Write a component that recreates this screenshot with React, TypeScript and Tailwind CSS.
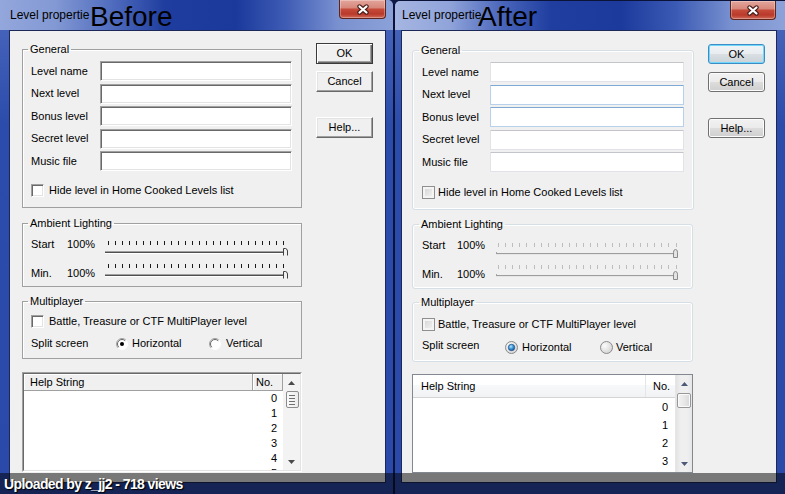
import React from "react"

const LABELS = ["Level name", "Next level", "Bonus level", "Secret level", "Music file"]
const ROWS_CLASSIC = ["0", "1", "2", "3", "4", "5"]
const ROWS_AERO = ["0", "1", "2", "3"]

function CloseButton({ aero }: { aero?: boolean }) {
  return (
    <div
      className={
        aero
          ? "mr-[9px] flex h-[19px] w-[46px] items-center justify-center rounded-b-[4px] border border-t-0 border-[#5e241e] bg-[linear-gradient(180deg,#e3a59c_0%,#d7897c_42%,#c54a3a_52%,#b9392a_78%,#d06a58_100%)] shadow-[inset_0_0_0_1px_rgba(255,255,255,0.3)]"
          : "mr-[7px] flex h-[19px] w-[47px] items-center justify-center rounded-b-[4px] border border-t-0 border-[#5e241e] bg-[linear-gradient(180deg,#e3a59c_0%,#d7897c_42%,#c54a3a_52%,#b9392a_78%,#d06a58_100%)] shadow-[inset_0_0_0_1px_rgba(255,255,255,0.3)]"
      }
    >
      <svg width="14" height="11" viewBox="0 0 14 11">
        <path d="M3.5 2.5L10.5 8.5M10.5 2.5L3.5 8.5" stroke="#4a1f1a" strokeWidth="4.4" strokeLinecap="round" />
        <path d="M3.5 2.5L10.5 8.5M10.5 2.5L3.5 8.5" stroke="#ffffff" strokeWidth="2.2" strokeLinecap="round" />
      </svg>
    </div>
  )
}

function Group({ title, aero, className, children }: { title: string; aero?: boolean; className: string; children: React.ReactNode }) {
  return (
    <fieldset
      className={
        aero
          ? `rounded-[3px] border border-[#d5dfe5] px-[9px] shadow-[inset_0_0_0_1px_#ffffff] ${className}`
          : `border border-[#a0a0a0] px-[8px] shadow-[inset_1px_1px_0_#ffffff] ${className}`
      }
    >
      <legend className="ml-[-3px] px-[2px] text-[11px] leading-[13px]">{title}</legend>
      {children}
    </fieldset>
  )
}

function Input({ aero, hover }: { aero?: boolean; hover?: boolean }) {
  if (!aero)
    return (
      <div className="h-[20px] w-[192px] border border-b-white border-l-[#a0a0a0] border-r-white border-t-[#a0a0a0] bg-white shadow-[inset_1px_1px_0_#696969,inset_-1px_-1px_0_#e3e3e3]" />
    )
  return hover ? (
    <div className="h-[20px] w-[194px] rounded-[1px] border border-[#b7d1ea] border-t-[#7fa9d4] bg-white" />
  ) : (
    <div className="h-[20px] w-[194px] rounded-[1px] border border-[#e2e3ea] border-t-[#c3c5cb] bg-white" />
  )
}

function Check({ aero }: { aero?: boolean }) {
  return aero ? (
    <div className="h-[13px] w-[13px] border border-[#8e8f8f] bg-[linear-gradient(135deg,#d2d2d2_0%,#f6f6f6_100%)] shadow-[inset_0_0_0_2px_#f4f4f4]" />
  ) : (
    <div className="h-[13px] w-[13px] border border-b-white border-l-[#a0a0a0] border-r-white border-t-[#a0a0a0] bg-white shadow-[inset_1px_1px_0_#696969,inset_-1px_-1px_0_#e3e3e3]" />
  )
}

function Radio({ aero, on }: { aero?: boolean; on?: boolean }) {
  if (aero)
    return (
      <svg width="13" height="13" viewBox="0 0 13 13" className="block">
        <defs>
          <radialGradient id="rbg" cx="35%" cy="35%" r="70%">
            <stop offset="0%" stopColor="#fbfbfb" />
            <stop offset="100%" stopColor="#d4d4d4" />
          </radialGradient>
          <radialGradient id="rdot" cx="40%" cy="35%" r="70%">
            <stop offset="0%" stopColor="#aee8ff" />
            <stop offset="55%" stopColor="#3a8fd2" />
            <stop offset="100%" stopColor="#1c4f8c" />
          </radialGradient>
        </defs>
        <circle cx="6.5" cy="6.5" r="6" fill="url(#rbg)" stroke="#8a8a8a" />
        {on && <circle cx="6.5" cy="6.5" r="3.2" fill="url(#rdot)" stroke="#24578f" strokeWidth="0.8" />}
      </svg>
    )
  return (
    <svg width="12" height="12" viewBox="0 0 12 12" className="block">
      <circle cx="6" cy="6" r="5.5" fill="#ffffff" />
      <path d="M2.1 9.9A5.5 5.5 0 0 1 9.9 2.1" stroke="#a0a0a0" fill="none" />
      <path d="M2.8 9.2A4.5 4.5 0 0 1 9.2 2.8" stroke="#696969" fill="none" />
      <path d="M9.9 2.1A5.5 5.5 0 0 1 2.1 9.9" stroke="#ffffff" fill="none" />
      {on && <circle cx="6" cy="6" r="2" fill="#000000" />}
    </svg>
  )
}

function Slider({ aero }: { aero?: boolean }) {
  const ticks = Array.from({ length: 26 }, (_, i) => i)
  if (aero)
    return (
      <svg width="184" height="16" viewBox="0 0 184 16" className="block">
        {ticks.map((i) => {
          const x = Math.round(2 + i * 7.1) + 0.5
          return <line key={i} x1={x} x2={x} y1={0} y2={4} stroke="#bdbdbd" />
        })}
        <line x1="0.5" x2="0.5" y1="9" y2="12" stroke="#a8a8a8" />
        <rect x="0" y="10" width="182" height="1" fill="#9d9d9d" />
        <rect x="0" y="11" width="182" height="1" fill="#e6e6e6" />
        <path d="M177.5 14.5V9.2Q177.5 6.5 179.5 6.5Q181.5 6.5 181.5 9.2V14.5Z" fill="#e4e4e4" stroke="#8a8a8a" />
      </svg>
    )
  return (
    <svg width="184" height="16" viewBox="0 0 184 16" className="block">
      {ticks.map((i) => {
        const x = 3 + i * 7 + 0.5
        return <line key={i} x1={x} x2={x} y1={0} y2={4} stroke="#1a1a1a" />
      })}
      <rect x="0" y="10" width="179" height="1" fill="#a0a0a0" />
      <rect x="0" y="11" width="179" height="1" fill="#505050" />
      <rect x="0" y="12" width="179" height="1" fill="#ffffff" />
      <path d="M178.5 14.5V7.5M178.5 7.5H180.5Q182.5 8 182.5 10V14.5" fill="#f0f0f0" stroke="#404040" />
    </svg>
  )
}

function Arrow({ up, aero }: { up?: boolean; aero?: boolean }) {
  return (
    <svg width="7" height="4" viewBox="0 0 7 4" className="block">
      <path d={up ? "M0 4L3.5 0L7 4Z" : "M0 0L3.5 4L7 0Z"} fill={aero ? "#4b5a78" : "#4a4a4a"} />
    </svg>
  )
}

function ListView({ aero }: { aero?: boolean }) {
  if (aero)
    return (
      <div className="mt-[12px] flex h-[99px] w-[281px] border border-[#828790] bg-white">
        <div className="flex w-[262px] flex-col overflow-hidden">
          <div className="flex h-[23px] shrink-0 border-b border-[#d5d5d5] bg-[linear-gradient(180deg,#ffffff_0%,#ffffff_45%,#f7f8fa_46%,#f1f2f4_100%)]">
            <div className="flex w-[233px] items-center border-r border-[#e3e5e7] pl-[8px]">Help String</div>
            <div className="flex flex-1 items-center pl-[7px]">No.</div>
          </div>
          {ROWS_AERO.map((n) => (
            <div key={n} className="flex h-[18px] shrink-0 items-center justify-end pr-[7px]">
              {n}
            </div>
          ))}
        </div>
        <div className="flex w-[17px] flex-col items-center border-l border-[#e6e6e6] bg-[linear-gradient(90deg,#e3e3e3_0%,#efefef_30%,#efefef_70%,#e6e6e6_100%)]">
          <div className="flex h-[17px] items-center">
            <Arrow up aero />
          </div>
          <div className="mt-[1px] h-[15px] w-[14px] rounded-[2px] border border-[#979797] bg-[linear-gradient(90deg,#f3f3f3_0%,#e8e8e8_50%,#d8d8d8_100%)] shadow-[inset_0_0_0_1px_#fafafa]" />
          <div className="flex-1" />
          <div className="flex h-[17px] items-center">
            <Arrow aero />
          </div>
        </div>
      </div>
    )
  return (
    <div className="mt-[13px] flex h-[100px] w-[280px] border border-b-white border-l-[#a0a0a0] border-r-white border-t-[#a0a0a0]">
      <div className="flex flex-1 border border-b-[#e3e3e3] border-l-[#696969] border-r-[#e3e3e3] border-t-[#696969] bg-white">
        <div className="flex w-[259px] flex-col overflow-hidden">
          <div className="flex h-[17px] shrink-0">
            <div className="flex w-[229px] items-center border-b border-r border-[#a0a0a0] bg-[#f0f0f0] pl-[6px] shadow-[inset_1px_1px_0_#ffffff]">Help String</div>
            <div className="flex flex-1 items-center border-b border-r border-[#a0a0a0] bg-[#f0f0f0] pl-[3px] shadow-[inset_1px_1px_0_#ffffff]">No.</div>
          </div>
          {ROWS_CLASSIC.map((n) => (
            <div key={n} className="flex h-[15px] shrink-0 items-center justify-end pr-[6px]">
              {n}
            </div>
          ))}
        </div>
        <div className="flex w-[17px] flex-col items-center bg-[#f3f3f3]">
          <div className="flex h-[17px] items-center">
            <Arrow up />
          </div>
          <div className="ml-[1px] flex h-[17px] w-[13px] flex-col items-center justify-center gap-[2px] rounded-[2px] border border-[#8c8c8c] bg-[linear-gradient(90deg,#fafafa_0%,#ececec_100%)]">
            <div className="h-px w-[6px] bg-[#6f6f6f]" />
            <div className="h-px w-[6px] bg-[#6f6f6f]" />
            <div className="h-px w-[6px] bg-[#6f6f6f]" />
            <div className="h-px w-[6px] bg-[#6f6f6f]" />
          </div>
          <div className="flex-1" />
          <div className="flex h-[17px] items-center">
            <Arrow />
          </div>
        </div>
      </div>
    </div>
  )
}

function Button({ aero, label, main, className }: { aero?: boolean; label: string; main?: boolean; className: string }) {
  if (aero)
    return (
      <div
        className={
          main
            ? `flex h-[20px] w-[57px] items-center justify-center rounded-[3px] border border-[#3c8cc6] bg-[linear-gradient(180deg,#f1f4f6_0%,#e9edf0_48%,#d9dfe3_50%,#cbd3d8_100%)] shadow-[inset_0_0_0_1px_#6fd8fb] ${className}`
            : `flex h-[20px] w-[57px] items-center justify-center rounded-[3px] border border-[#707070] bg-[linear-gradient(180deg,#f2f2f2_0%,#ebebeb_48%,#dddddd_50%,#cfcfcf_100%)] shadow-[inset_0_0_0_1px_#fcfcfc] ${className}`
        }
      >
        {label}
      </div>
    )
  return (
    <div
      className={
        main
          ? `flex h-[21px] w-[57px] items-center justify-center border border-[#3a3a3a] bg-[#f0f0f0] shadow-[inset_1px_1px_0_#ffffff,inset_-1px_-1px_0_#696969,inset_-2px_-2px_0_#a0a0a0] ${className}`
          : `flex h-[21px] w-[57px] items-center justify-center border border-b-[#696969] border-l-white border-r-[#696969] border-t-white bg-[#f0f0f0] shadow-[inset_-1px_-1px_0_#a0a0a0,inset_1px_1px_0_#e3e3e3] ${className}`
      }
    >
      {label}
    </div>
  )
}

function Body({ aero }: { aero?: boolean }) {
  return (
    <div
      className={
        aero
          ? "flex h-[453px] w-[376px] border border-[#1c2858] bg-[#f0f0f0] pl-[10px] pt-[13px]"
          : "flex h-[453px] w-[377px] border border-[#1c2858] bg-[#f0f0f0] pl-[12px] pt-[12px]"
      }
    >
      <div className="flex flex-col">
        <Group title="General" aero={aero} className={aero ? "w-[281px] pb-[10px] pt-[5px]" : "w-[280px] pb-[10px] pt-[5px]"}>
          <div className={aero ? "flex flex-col gap-[2.5px]" : "flex flex-col gap-[2.6px]"}>
            {LABELS.map((l, i) => (
              <div key={l} className="flex h-[20px] items-center">
                <span className={aero ? "w-[68px]" : "w-[69px]"}>{l}</span>
                <Input aero={aero} hover={i === 1 || i === 2} />
              </div>
            ))}
          </div>
          <div className={aero ? "mt-[14px] flex h-[13px] items-center gap-[3px]" : "mt-[13px] flex h-[13px] items-center gap-[5px]"}>
            <Check aero={aero} />
            <span>Hide level in Home Cooked Levels list</span>
          </div>
        </Group>

        <Group title="Ambient Lighting" aero={aero} className={aero ? "mt-[8px] w-[281px] pb-[3px] pt-[8px]" : "mt-[9px] w-[280px] pb-[2px] pt-[8px]"}>
          <div className="flex h-[20px] items-start">
            <span className={aero ? "w-[35px]" : "w-[36px]"}>Start</span>
            <span className={aero ? "w-[39px]" : "w-[38px]"}>100%</span>
            <div className={aero ? "mt-[4px]" : "mt-[3px]"}>
              <Slider aero={aero} />
            </div>
          </div>
          <div className="mt-[6px] flex h-[20px] items-start">
            <span className={aero ? "mt-[3px] w-[35px]" : "mt-[3px] w-[36px]"}>Min.</span>
            <span className={aero ? "mt-[3px] w-[39px]" : "mt-[3px] w-[38px]"}>100%</span>
            <Slider aero={aero} />
          </div>
        </Group>

        <Group title="Multiplayer" aero={aero} className={aero ? "mt-[7px] w-[281px] pb-[9px] pt-[9px]" : "mt-[8px] w-[280px] pb-[8px] pt-[7px]"}>
          <div className={aero ? "flex h-[13px] items-center gap-[3px]" : "flex h-[13px] items-center gap-[5px]"}>
            <Check aero={aero} />
            <span>Battle, Treasure or CTF MultiPlayer level</span>
          </div>
          <div className={aero ? "mt-[8px] flex h-[13px] items-center" : "mt-[9px] flex h-[13px] items-center"}>
            <span className={aero ? "w-[83px]" : "w-[85px]"}>Split screen</span>
            <div className={aero ? "mt-[3px]" : ""}>
              <Radio aero={aero} on />
            </div>
            <span className={aero ? "ml-[4px] mt-[3px] w-[78px]" : "ml-[4px] w-[77px]"}>Horizontal</span>
            <div className={aero ? "mt-[3px]" : ""}>
              <Radio aero={aero} />
            </div>
            <span className={aero ? "ml-[3px] mt-[3px]" : "ml-[5px]"}>Vertical</span>
          </div>
        </Group>

        <ListView aero={aero} />
      </div>

      <div className="ml-[14px] flex flex-col">
        <Button aero={aero} label="OK" main className="" />
        <Button aero={aero} label="Cancel" className={aero ? "mt-[8px]" : "mt-[7px]"} />
        <Button aero={aero} label="Help..." className={aero ? "mt-[26px]" : "mt-[25px]"} />
      </div>
    </div>
  )
}

function Window({ aero, tag }: { aero?: boolean; tag: string }) {
  return (
    <div
      className={
        aero
          ? "relative flex h-[494px] w-[391px] shrink-0 flex-col rounded-tl-[6px] border-l border-t border-[#0b1438] bg-[linear-gradient(180deg,#4c69bd_0%,#2c4cab_25%,#2a49a8_100%)]"
          : "relative flex h-[494px] w-[394px] shrink-0 flex-col rounded-tr-[6px] border-r border-[#0b1438] bg-[linear-gradient(180deg,#4c69bd_0%,#2c4cab_25%,#2a49a8_100%)]"
      }
    >
      <div
        className={
          aero
            ? "flex h-[29px] items-start rounded-tl-[5px] bg-[linear-gradient(90deg,#a6b6e2_0%,#90a4da_14%,#4864ba_28%,#1f3e9f_40%,#1c3a9c_58%,#3b5ab4_72%,#7890cf_86%,#8da2d9_100%)]"
            : "flex h-[30px] items-start rounded-tr-[5px] bg-[linear-gradient(90deg,#93a7dc_0%,#8399d4_14%,#4a67bb_30%,#1f3d9e_42%,#1b399b_60%,#3f5db5_73%,#7a91d0_86%,#8ba1d8_100%)]"
        }
      >
        <span className={aero ? "pl-[7px] pt-[7px] text-[12px] leading-[15px]" : "pl-[10px] pt-[8px] text-[12px] leading-[15px]"}>
          Level propertie
        </span>
        <div className="flex-1" />
        <CloseButton aero={aero} />
      </div>
      <div className={aero ? "pl-[6px]" : "pl-[9px]"}>
        <Body aero={aero} />
      </div>
      <span
        className={
          aero
            ? "absolute left-[83px] top-[2px] text-[28px] leading-[28px] text-black"
            : "absolute left-[90px] top-[3px] text-[28px] leading-[28px] text-black"
        }
      >
        {tag}
      </span>
    </div>
  )
}

export default function App() {
  return (
    <div className="relative flex h-[494px] w-[785px] overflow-hidden bg-[#0e1a44] font-['Liberation_Sans',Arial,sans-serif] text-[11px] leading-[13px] text-black">
      <Window tag="Before" />
      <Window aero tag="After" />
      <div className="absolute inset-x-0 bottom-0 flex h-[21px] items-center bg-black/50 pl-[4px] text-[14px] font-bold leading-[16px] tracking-[-0.6px] text-white [text-shadow:1px_1px_1px_#000]">
        Uploaded by z_jj2 - 718 views
      </div>
    </div>
  )
}
